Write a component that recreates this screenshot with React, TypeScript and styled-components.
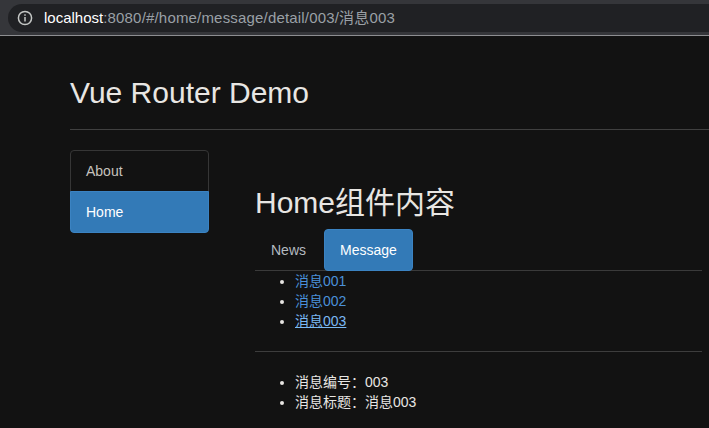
import React from "react";
import styled, { createGlobalStyle } from "styled-components";

const Global = createGlobalStyle`
  html, body { margin: 0; padding: 0; background: #121212; }
  body {
    font-family: "Liberation Sans", "Noto Sans CJK SC", sans-serif;
    font-size: 14px;
    line-height: 20px;
    color: #e8e6e3;
    overflow: hidden;
  }
  * { box-sizing: border-box; }
`;

const BrowserBar = styled.div`
  height: 36px;
  background: #35363a;
  padding: 4px 0 3px 8px;
  border-bottom: 1px solid #8d8e91;
`;

const Omnibox = styled.div`
  height: 28px;
  background: #202124;
  border-radius: 14px 0 0 14px;
  display: flex;
  align-items: center;
  padding-left: 9px;
  gap: 11px;
  font-size: 15px;
  white-space: nowrap;
`;

const Host = styled.span`
  color: #ffffff;
`;

const UrlRest = styled.span`
  color: #9aa0a6;
  letter-spacing: 0.18px;
`;

const Page = styled.div`
  padding-left: 70px;
`;

const PageHeader = styled.header`
  margin-top: 40px;
  padding-bottom: 20px;
  border-bottom: 1px solid #404040;
  margin-bottom: 20px;
`;

const Title = styled.h2`
  margin: 0;
  font-size: 30px;
  line-height: 33px;
  font-weight: 400;
  color: #e8e6e3;
`;

const Main = styled.div`
  display: grid;
  grid-template-columns: 139px 447px;
  column-gap: 46px;
  align-items: start;
`;

const ListGroup = styled.nav`
  display: flex;
  flex-direction: column;
`;

const ListItem = styled.a<{ $active?: boolean }>`
  position: relative;
  display: block;
  padding: 10px 15px;
  line-height: 20px;
  margin-bottom: -1px;
  border: 1px solid ${(p) => (p.$active ? "#3b83c2" : "#363636")};
  background: ${(p) => (p.$active ? "#337ab7" : "transparent")};
  color: ${(p) => (p.$active ? "#ffffff" : "#c6c3be")};
  z-index: ${(p) => (p.$active ? 2 : 1)};
  text-decoration: none;
  &:first-child { border-radius: 4px 4px 0 0; }
  &:last-child { border-radius: 0 0 4px 4px; }
`;

const Content = styled.section``;

const Heading = styled.h2`
  margin: 36px 0 10px;
  font-size: 30px;
  line-height: 33px;
  font-weight: 400;
  color: #e8e6e3;
`;

const Tabs = styled.div`
  display: flex;
  border-bottom: 1px solid #3a3a3a;
`;

const Tab = styled.a<{ $active?: boolean }>`
  display: block;
  padding: 10px 15px;
  line-height: 20px;
  margin-right: 2px;
  margin-bottom: -1px;
  border: 1px solid ${(p) => (p.$active ? "#3b83c2" : "transparent")};
  border-radius: 4px;
  background: ${(p) => (p.$active ? "#337ab7" : "transparent")};
  color: ${(p) => (p.$active ? "#ffffff" : "#b4bac0")};
  text-decoration: none;
`;

const BulletList = styled.ul`
  margin: 0;
  padding-left: 40px;
  list-style: disc;
  color: #e8e6e3;
`;

const Item = styled.li`
  line-height: 20px;
`;

const MsgLink = styled.a<{ $active?: boolean }>`
  color: ${(p) => (p.$active ? "#7ab8f2" : "#4a90d9")};
  text-decoration: ${(p) => (p.$active ? "underline" : "none")};
`;

const Divider = styled.hr`
  margin: 20px 0;
  border: 0;
  border-top: 1px solid #3d3d3d;
`;

const InfoIcon = () => (
  <svg width="16" height="16" viewBox="0 0 16 16" fill="none">
    <circle cx="8" cy="8" r="6.6" stroke="#c4c7c5" strokeWidth="1.5" />
    <rect x="7.25" y="7" width="1.5" height="4.5" fill="#c4c7c5" />
    <rect x="7.25" y="4.3" width="1.5" height="1.5" fill="#c4c7c5" />
  </svg>
);

const messages = [
  { id: "001", title: "消息001" },
  { id: "002", title: "消息002" },
  { id: "003", title: "消息003" },
];

export default function App() {
  return (
    <>
      <Global />
      <BrowserBar>
        <Omnibox>
          <InfoIcon />
          <span>
            <Host>localhost</Host>
            <UrlRest>:8080/#/home/message/detail/003/消息003</UrlRest>
          </span>
        </Omnibox>
      </BrowserBar>
      <Page>
        <PageHeader>
          <Title>Vue Router Demo</Title>
        </PageHeader>
        <Main>
          <ListGroup>
            <ListItem>About</ListItem>
            <ListItem $active>Home</ListItem>
          </ListGroup>
          <Content>
            <Heading>Home组件内容</Heading>
            <Tabs>
              <Tab>News</Tab>
              <Tab $active>Message</Tab>
            </Tabs>
            <BulletList>
              {messages.map((m) => (
                <Item key={m.id}>
                  <MsgLink $active={m.id === "003"}>{m.title}</MsgLink>
                </Item>
              ))}
            </BulletList>
            <Divider />
            <BulletList>
              <Item>消息编号：003</Item>
              <Item>消息标题：消息003</Item>
            </BulletList>
          </Content>
        </Main>
      </Page>
    </>
  );
}
